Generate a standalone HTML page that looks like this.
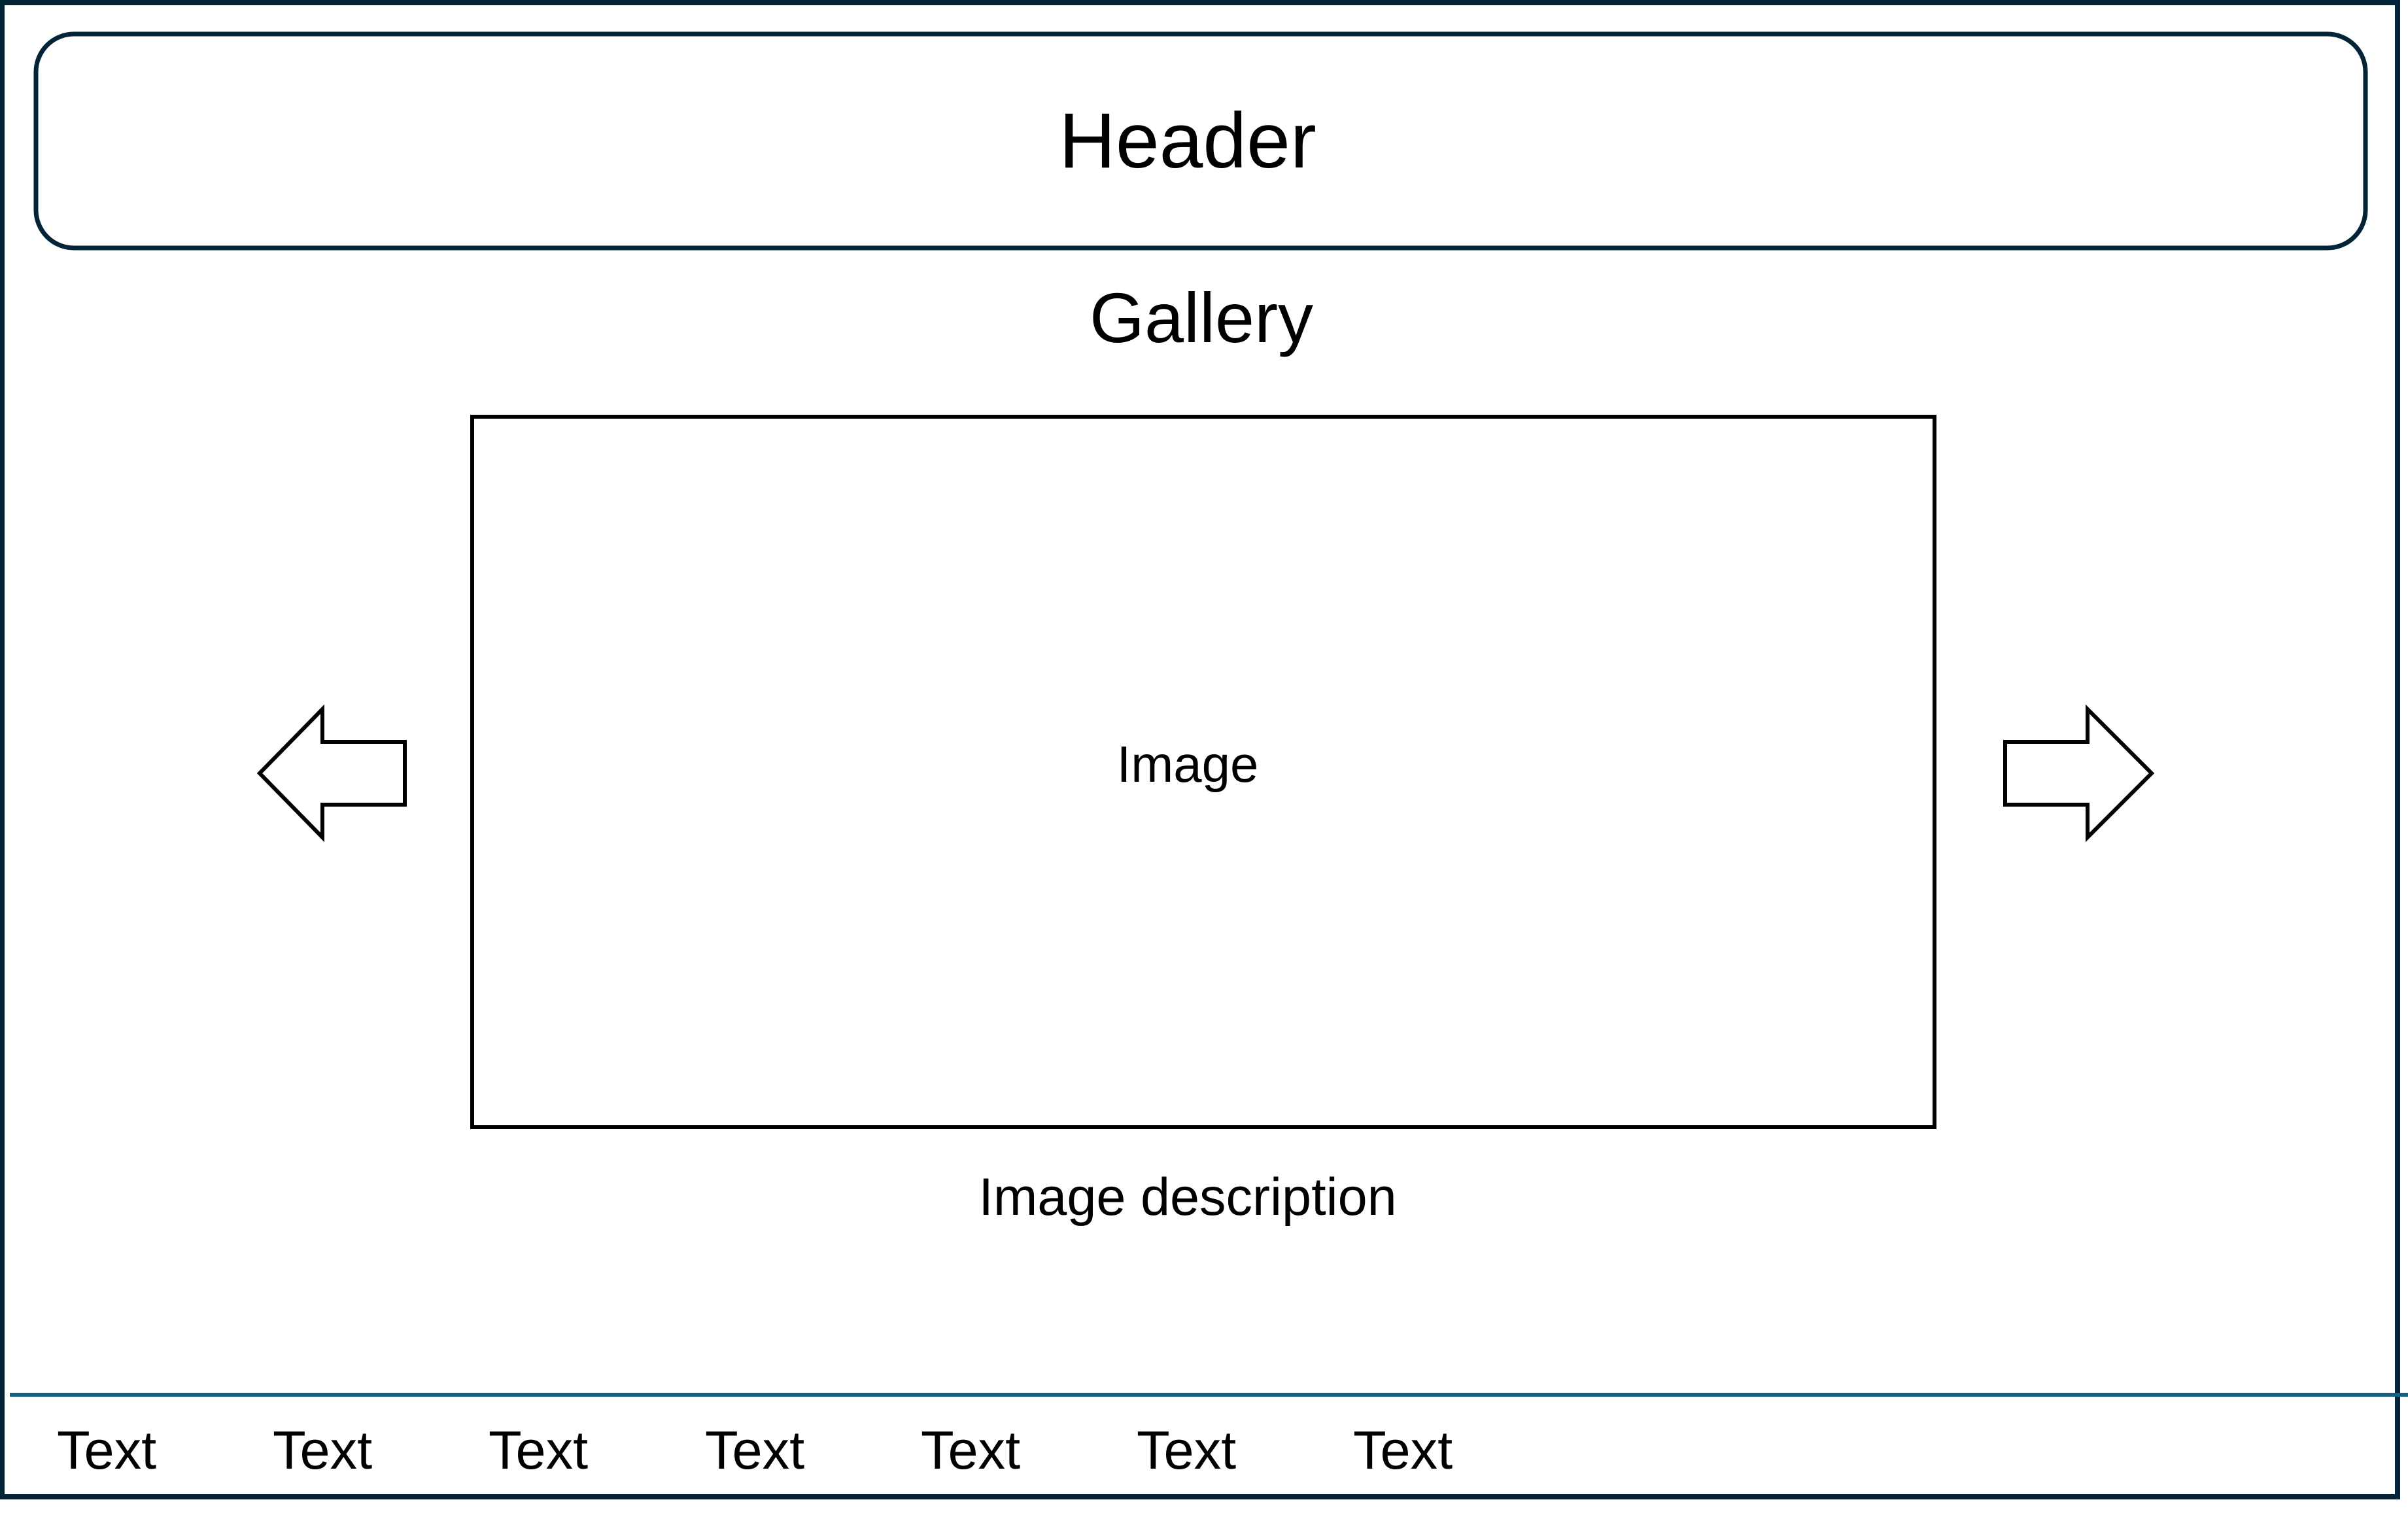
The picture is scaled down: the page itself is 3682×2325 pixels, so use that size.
<!DOCTYPE html>
<html><head><meta charset="utf-8"><style>
html,body{margin:0;padding:0;background:#fff;}
svg{display:block;}
text{font-family:"Liberation Sans",sans-serif;fill:#000;}
</style></head><body>
<svg width="3682" height="2325" viewBox="0 0 3682 2325" xmlns="http://www.w3.org/2000/svg">
<rect x="0" y="0" width="3682" height="2325" fill="#fff"/>
<rect x="3" y="4" width="3663" height="2284" fill="none" stroke="#032337" stroke-width="8"/>
<rect x="55" y="52" width="3562" height="327" rx="58" ry="58" fill="none" stroke="#032337" stroke-width="7"/>
<text x="1816" y="256" font-size="120" text-anchor="middle">Header</text>
<text x="1837" y="523" font-size="108" text-anchor="middle">Gallery</text>
<rect x="722" y="637" width="2236" height="1086" fill="none" stroke="#000" stroke-width="6"/>
<text x="1816" y="1195" font-size="78" text-anchor="middle">Image</text>
<text x="1816" y="1857" font-size="81" text-anchor="middle">Image description</text>
<polygon points="397,1182 493,1084 493,1134 619,1134 619,1230 493,1230 493,1280" fill="none" stroke="#000" stroke-width="6"/>
<polygon points="3290,1182 3192,1084 3192,1134 3066,1134 3066,1230 3192,1230 3192,1280" fill="none" stroke="#000" stroke-width="6"/>
<rect x="15" y="2129" width="3667" height="6" fill="#156082"/>
<g font-size="83">
<text x="87" y="2245">Text</text>
<text x="417" y="2245">Text</text>
<text x="747" y="2245">Text</text>
<text x="1078" y="2245">Text</text>
<text x="1408" y="2245">Text</text>
<text x="1738" y="2245">Text</text>
<text x="2069" y="2245">Text</text>
</g>
</svg>
</body></html>
